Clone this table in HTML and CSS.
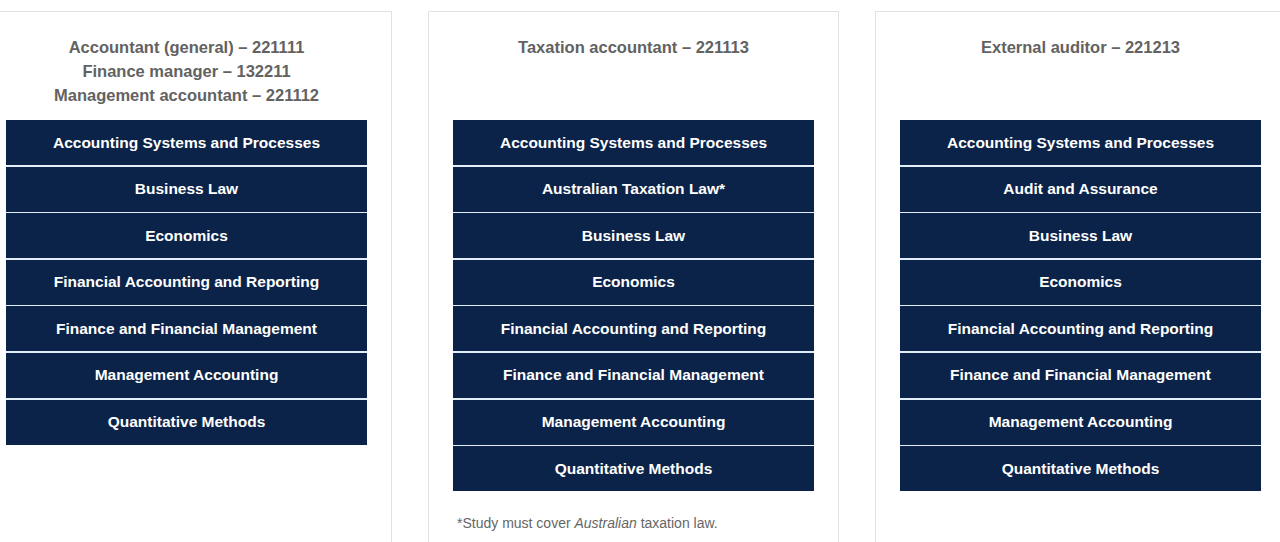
FILE: index.html
```html
<!DOCTYPE html>
<html lang="en">
<head>
    <meta charset="UTF-8">
    <meta name="viewport" content="width=device-width, initial-scale=1.0">
    <title>Accounting occupations</title>
    <link rel="stylesheet" href="styles.css">
</head>
<body>
    <div class="cartoes">
        <div class="cartao">
            <div class="titulo">
                Accountant (general) – 221111<br>
                Finance manager – 132211<br>
                Management accountant – 221112
            </div>
            <ul class="lista">
                <li>Accounting Systems and Processes</li>
                <li>Business Law</li>
                <li>Economics</li>
                <li>Financial Accounting and Reporting</li>
                <li>Finance and Financial Management</li>
                <li>Management Accounting</li>
                <li>Quantitative Methods</li>
            </ul>
        </div>

        <div class="cartao">
            <div class="titulo">Taxation accountant – 221113</div>
            <ul class="lista">
                <li>Accounting Systems and Processes</li>
                <li>Australian Taxation Law*</li>
                <li>Business Law</li>
                <li>Economics</li>
                <li>Financial Accounting and Reporting</li>
                <li>Finance and Financial Management</li>
                <li>Management Accounting</li>
                <li>Quantitative Methods</li>
            </ul>
            <p class="nota">*Study must cover <em>Australian</em> taxation law.</p>
        </div>

        <div class="cartao">
            <div class="titulo">External auditor – 221213</div>
            <ul class="lista">
                <li>Accounting Systems and Processes</li>
                <li>Audit and Assurance</li>
                <li>Business Law</li>
                <li>Economics</li>
                <li>Financial Accounting and Reporting</li>
                <li>Finance and Financial Management</li>
                <li>Management Accounting</li>
                <li>Quantitative Methods</li>
            </ul>
        </div>
    </div>
</body>
</html>
```

FILE: styles.css
```css
body {
    font-family: "Liberation Sans", Arial, sans-serif;
    background-color: #fff;
    margin: 0;
    padding: 0;
    overflow: hidden;
}

.cartoes {
    display: flex;
    gap: 36px;
    margin-left: -19px;
    padding-top: 11px;
    width: 1310px;
}

.cartao {
    flex: 0 0 411px;
    box-sizing: border-box;
    height: 600px;
    border: 1px solid #e2e2e2;
    padding: 0 24px;
}

.titulo {
    height: 108px;
    box-sizing: border-box;
    padding-top: 23px;
    text-align: center;
    color: #626262;
    font-weight: bold;
    font-size: 16.5px;
    line-height: 24px;
}

.lista {
    list-style: none;
    margin: 0;
    padding: 0;
    display: flex;
    flex-direction: column;
    gap: 1.6px;
    background-color: #e4eef6;
}

.lista li {
    background-color: #0b2348;
    color: #fff;
    font-weight: bold;
    font-size: 15.5px;
    height: 45px;
    display: flex;
    align-items: center;
    justify-content: center;
}

.nota {
    margin: 24px 0 0 4px;
    color: #666;
    font-size: 14px;
}
```
